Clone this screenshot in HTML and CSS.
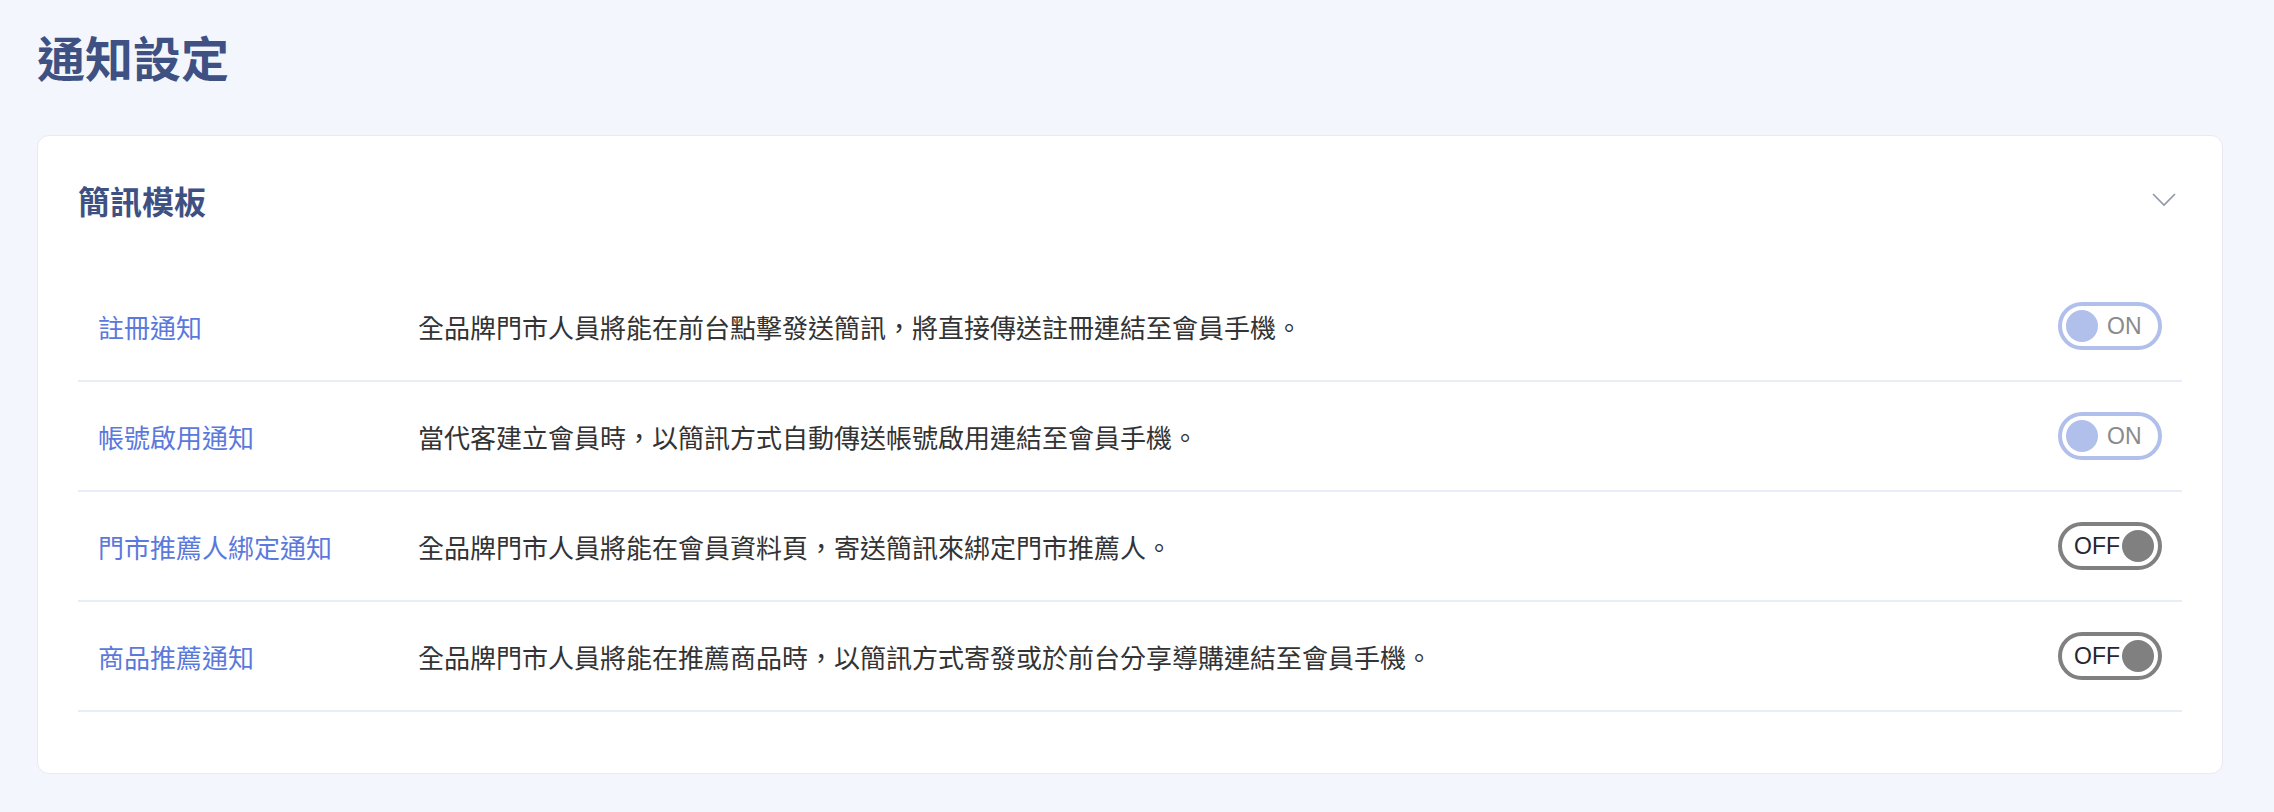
FILE: index.html
```html
<!DOCTYPE html>
<html lang="zh-Hant">
<head>
    <meta charset="UTF-8">
    <meta name="viewport" content="width=device-width, initial-scale=1.0">
    <title>通知設定</title>
    <link rel="stylesheet" href="styles.css">
</head>
<body>
    <div class="page">
        <h1 class="page-title">通知設定</h1>

        <section class="panel">
            <div class="panel-header">
                <h2>簡訊模板</h2>
                <svg class="chevron" width="24" height="14" viewBox="0 0 24 14">
                    <polyline points="1,1 12,12 23,1" fill="none" stroke="#8e97a8" stroke-width="1.6"/>
                </svg>
            </div>

            <ul class="notice-list">
                <li class="notice-row">
                    <span class="notice-name">註冊通知</span>
                    <span class="notice-desc">全品牌門市人員將能在前台點擊發送簡訊，將直接傳送註冊連結至會員手機。</span>
                    <button class="switch on"><span class="knob"></span><span class="switch-text">ON</span></button>
                </li>
                <li class="notice-row">
                    <span class="notice-name">帳號啟用通知</span>
                    <span class="notice-desc">當代客建立會員時，以簡訊方式自動傳送帳號啟用連結至會員手機。</span>
                    <button class="switch on"><span class="knob"></span><span class="switch-text">ON</span></button>
                </li>
                <li class="notice-row">
                    <span class="notice-name">門市推薦人綁定通知</span>
                    <span class="notice-desc">全品牌門市人員將能在會員資料頁，寄送簡訊來綁定門市推薦人。</span>
                    <button class="switch off"><span class="switch-text">OFF</span><span class="knob"></span></button>
                </li>
                <li class="notice-row">
                    <span class="notice-name">商品推薦通知</span>
                    <span class="notice-desc">全品牌門市人員將能在推薦商品時，以簡訊方式寄發或於前台分享導購連結至會員手機。</span>
                    <button class="switch off"><span class="switch-text">OFF</span><span class="knob"></span></button>
                </li>
            </ul>
        </section>
    </div>
</body>
</html>
```

FILE: styles.css
```css
body {
    margin: 0;
    padding: 0;
    background: #f3f6fd;
    font-family: "Noto Sans CJK TC", "Noto Sans", sans-serif;
    color: #333;
}

.page {
    padding: 20px 51px 40px 37px;
}

.page-title {
    margin: 0 0 43px 0;
    font-size: 48px;
    line-height: 72px;
    font-weight: 700;
    color: #3f5182;
}

.panel {
    background: #fff;
    border: 1px solid #e8eaef;
    border-radius: 12px;
    padding: 40px 40px 61px 40px;
}

.panel-header {
    display: flex;
    align-items: center;
    justify-content: space-between;
    height: 48px;
    margin-bottom: 48px;
}

.panel-header h2 {
    margin: 0;
    font-size: 32px;
    line-height: 48px;
    font-weight: 700;
    color: #3f5182;
}

.chevron {
    margin-right: 6px;
}

.notice-list {
    list-style: none;
    margin: 0;
    padding: 0;
}

.notice-row {
    display: flex;
    align-items: center;
    height: 110px;
    box-sizing: border-box;
    padding: 0 20px;
    border-bottom: 2px solid #e9edf8;
}

.notice-name {
    width: 320px;
    flex-shrink: 0;
    font-size: 26px;
    color: #5b78dc;
}

.notice-desc {
    flex: 1;
    font-size: 26px;
    color: #333;
}

.switch {
    display: flex;
    align-items: center;
    width: 104px;
    height: 48px;
    box-sizing: border-box;
    border-radius: 24px;
    border: 4px solid;
    background: #fff;
    padding: 0 4px;
    font-family: "Liberation Sans", Arial, sans-serif;
    font-size: 23px;
    cursor: pointer;
}

.knob {
    width: 32px;
    height: 32px;
    border-radius: 50%;
    flex-shrink: 0;
}

.switch.on {
    border-color: #b1bfeb;
    gap: 9px;
}

.switch.on .knob { background: #b1bfeb; }
.switch.on .switch-text { color: #8a8a8a; }

.switch.off {
    border-color: #808080;
    padding-left: 12px;
    gap: 2px;
}

.switch.off .knob { background: #808080; }
.switch.off .switch-text { color: #232733; }
```
